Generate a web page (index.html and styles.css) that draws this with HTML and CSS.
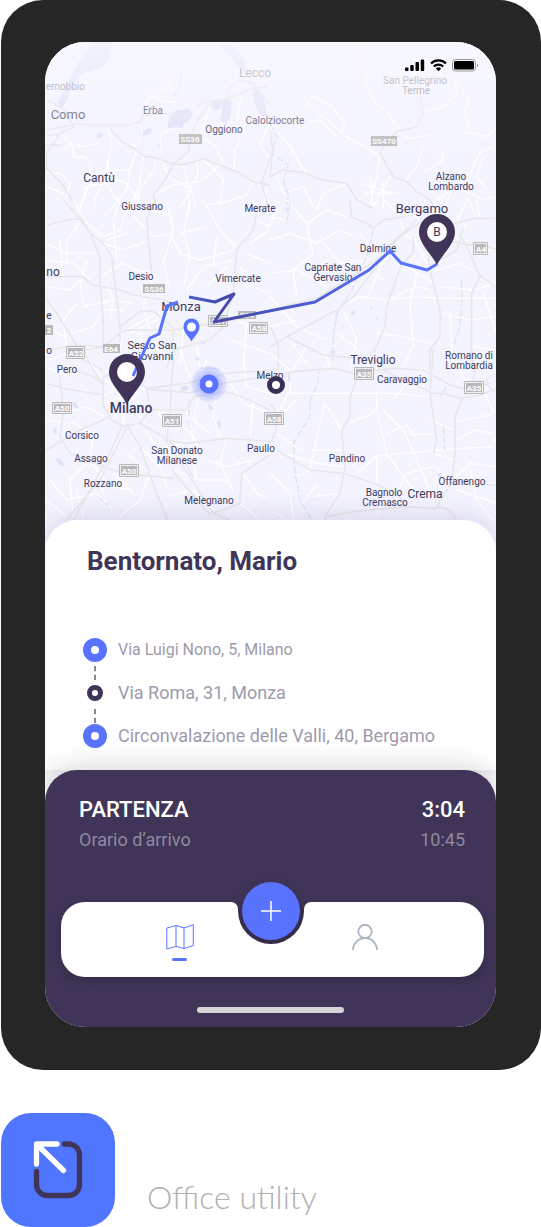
FILE: index.html
```
<!DOCTYPE html>
<html lang="it">
<head>
<meta charset="UTF-8">
<meta name="viewport" content="width=device-width, initial-scale=1.0">
<title>Office utility</title>
<link rel="stylesheet" href="styles.css">
</head>
<body>
<main class="phone">
  <div class="screen">
    <div class="status">
      <svg width="20" height="14" viewBox="0 0 20 14"><path d="M0 10.500a1 1 0 0 1 1-1h1.500a1 1 0 0 1 1 1V12a1 1 0 0 1-1 1H1a1 1 0 0 1-1-1zM5.300 8a1 1 0 0 1 1-1h1.400a1 1 0 0 1 1 1v4a1 1 0 0 1-1 1H6.300a1 1 0 0 1-1-1zM10.500 5a1 1 0 0 1 1-1H13a1 1 0 0 1 1 1v7a1 1 0 0 1-1 1h-1.500a1 1 0 0 1-1-1zM15.700 2.500a1 1 0 0 1 1-1h1.500a1 1 0 0 1 1 1V12a1 1 0 0 1-1 1h-1.500a1 1 0 0 1-1-1z"/></svg>
      <svg width="17" height="14" viewBox="0 0 17 14"><g fill="none" stroke="#000" stroke-width="2.200"><path d="M1 5.600a10.500 10.500 0 0 1 15 0"/><path d="M3.800 8.500a6.700 6.700 0 0 1 9.400 0"/></g><path d="M5.800 10.500a3.900 3.900 0 0 1 5.400 0L8.500 13.200z"/></svg>
      <svg width="27" height="14" viewBox="0 0 27 14"><rect x=".5" y="1.500" width="23" height="11.500" rx="3" fill="none" stroke="#999"/><rect x="2" y="3" width="20" height="8.500" rx="1.500"/><path d="M25 5.500v4q2-2 0-4" fill="#888"/></svg>
    </div>

    <svg class="map" viewBox="45 42 451 500" role="img" aria-label="Milano - Monza - Bergamo">
      <defs>
        <linearGradient id="fade" x1="0" y1="0" x2="0" y2="1">
          <stop offset="0" stop-color="#f8f8ff"/>
          <stop offset="1" stop-color="#f8f8ff" stop-opacity="0"/>
        </linearGradient>
        <linearGradient id="trip" gradientUnits="userSpaceOnUse" x1="190" y1="0" x2="400" y2="0">
          <stop offset="0" stop-color="#4d5fd0"/>
          <stop offset=".15" stop-color="#4548a8"/>
          <stop offset="1" stop-color="#5973ff"/>
        </linearGradient>
        <radialGradient id="glow">
          <stop offset=".5" stop-color="#5973ff" stop-opacity=".4"/>
          <stop offset="1" stop-color="#5973ff" stop-opacity=".08"/>
        </radialGradient>
      </defs>
      <rect class="land" x="45" y="42" width="451" height="500"/>

      <!-- north west -->
      <g transform="translate(40 40) scale(.3333)">
        <path class="water" d="M120 60Q150 20 170 0H215Q220 60 180 85L130 100Q105 120 90 155 75 200 60 205 48 190 60 170 80 150 90 110ZM560 10Q620 40 615 95L590 80Q575 40 540 20Z"/>
        <path class="water" d="M388 228l20-18 40-2 11 15-14 20-14 8 -3 14-18-4-28 4zM297 285l12-16 22-6 9 7-14 12-20 9zM168 287l8-9 14 3-4 10-12 4zM515 185l14-6 14 3-2 24-18 8-10-12zM545 180l20-6 10 15-2 40-16 22-20-12 10-22zM645 142l12 4 12 24 10 40 6 18-22 0-16-30-8-30z"/>
        <path class="river" d="M425 100l-10 50-13 20M355 315l6 8"/>
        <path class="minor" d="M310 215l20-50 50-20 25-45M325 165l50 20 35 0M205 258l10 60-20 90M240 300l50 20 20-50M70 290l30 30 0 30 35 0 15 20 0 60-20 50-20 30M20 395l40 5 30 30-10 40M60 330l40-20 30 10 40-10M290 330l-20 60-10 60-50 60M270 390l-60 0-40 40-40 15M310 348l-10 80-30 80M350 355l-10 40-40 50-10 60M360 355l30 60 60 30 20 60M470 360l5 40-30 60 5 50M490 358l60 60-10 90M540 375l-60 50-80 10-60 30M580 395l5-60 30-80M600 300l-10-60 15-70M640 425l-20 40-60 20-60 10M680 440l-10 60M160 510l10-50 40-60-10-40M120 510l20-70 60-10 30 50M365 345l-5-60 40-20M200 410l60 20 40 60M690 250l-30 60 30 50M510 200l-30 90 50 30 20 50M20 440l50 20M430 375l20 80-30 50"/>
        <path class="road" d="M20 270l40-8 50-10 40 3 55 0 65 0 30-10 10-18 90-8M465 200l50-20 50-2 60-30 60-8M565 178l0-30 35-28 40 10 50 65M205 258l35 42 50 30 20 18 40 6 50 18 30 2 60-17 50 19 50 19 50 30 50 10M515 180l-35 50-30 60-5 45-45 38-25 47-35 45 10 50M20 180l55 30 25 50-40 20-40 60v45l45 45 40 65M20 315h45M20 285l40-2M690 350l-25 80 20 75"/>
      </g>

      <!-- north east -->
      <g transform="translate(270 40) scale(.3333)">
        <path class="minor" d="M250 0l20 60 20 50-5 25 30 50 40 35 25 40M110 190l15-20 60 25 40 60-10 25 110 65M110 190l60 50 70 60M20 270l40 50 30 50 20 30M400 430l40-50 20-60M460 220l60-20 40-40-5-50M555 110l20 40 20 35-15 40 20 20-15 35 30 0 35 10 20-20M600 400l30-60 45-25M460 400l60-40 0-20-15-5M300 500l20-90 10-70M270 430l100 30M280 460h110M310 500l50-90M340 430v80M300 410l10 100M500 480l60-40 80 40 30-10M20 410l20 50 60-20 30 60M140 510l20-50 70-30M520 510l30-70 50-40M590 470l20 40M380 275l40 20 60-10M200 290l-50-50-30 5M450 170v-50M640 350l-20 60 30 40"/>
        <path class="river" d="M0 250l20 40-15 50 50 35-15 50 15 40-5 50"/>
        <path class="road" d="M450 130v40l10 50-20 40-60 15-30 30-20 35 40 70 40 15 30 30 40 25 10 15M0 410l40-20 60 8 50 20 80 12 30 50 50 25M0 270l8 60-8 80"/>
      </g>

      <!-- west -->
      <g transform="translate(40 200) scale(.3333)">
        <path class="minor" d="M100 0l30 60 60 50 50-20 30-90M190 130l60 20 80-30M20 130l60 30 90 0M20 180l80 10 50 50M60 120l10 120M120 70l-40 50 0 70M140 180l-20 70 10 60M110 310l-40 50 10 90M130 320l90-20 60 10M200 250l20 50-10 60M240 0l-20 60 10 120 60 30 50 10M280 50l60 60 50-10 30 60 60 20 100-30M380 0l20 90-30 100 20 70M450 0l-20 100 20 60-20 110M500 80l-80 20M490 0l50 90 50 50M580 180l-90 20-50 70M530 110l-10 90M620 160l70 30M600 200l40 60 50 20M650 60l40 20M560 200l-60 60M20 260l70 10 30-30M20 380l50 30 90-30 30-50 60 0M340 220l-30 100 20 70M300 390l10 70M250 400l-20 90M430 390l-10 100M350 340l-110 60M470 440l10 70M560 350l80 30 50-10M570 420l120 40M620 370l-10 130M30 480l90-30M260 100l-60 20M330 30l70 20M370 300l-20 60-80 40M690 90l-60 40M250 190l-70 40"/>
        <path class="water" d="M465 475l10-4 4 8-11 4zM485 425l10 0 2 7-10 1zM470 505q35-12 75 5z"/>
        <path class="road" d="M70 0l45 50 35 50 30 70v80l10 120v80M20 75l60-15 45-5 25 45 40 30 25 40 25 210v50M20 230h110l25 25 85 15 40 15 90 15 50 15M650 40l-10 50-50 60-10 130-30 100-40 40-50 12-60 20-20 50M345 0l-25 60 15 160M20 300l30 40 60 95 80 5 50-40 20-10h140l120-20 130-20M240 380l60-45 40-2 60 50 20 10M400 390v120M190 440l-50 10-30-15-90 15M110 470l80 40"/>
      </g>

      <!-- east -->
      <g transform="translate(270 200) scale(.3333)">
        <path class="minor" d="M0 120l60-20 80 30 70-40 40 20M50 0l60 70 60-40 60 20M110 70l20 90-60 50 10 80M0 220l80-10 90 50M160 130l50 60 80-10M20 20l-20 60M190 330l80-40 80 10 80-10 90 5 150 0M350 300l90-40 40 10M350 160l-60 140M430 110l40 80M500 210l70-20 30 20M510 260l100 10 70-20M520 340l80 20 70-10M440 220l-20 90 10 130-30 60M395 190l100 60M320 400l80 10 80 20M220 330l40 90-20 80M200 400l80 60M60 420l50 70M0 290l80 90 90 40M80 360l-80 20M110 440l-40 70M180 500l-20-50M570 130l80 20 30-10M590 0l-30 70M620 0l10 60M540 340l10 160M605 440l70 10M640 280l40 120M390 60l20 50 30 10M270 100l40 50 50 10M380 30l60 20M340 0l40 40M270 200l70 40M490 90l80 30M570 100l20-30M480 60l50 10M0 50l40 10"/>
        <path class="river" d="M60 10l-10 60M310 90l-20 80-50 110-35 50-15 70v80M575 240v70l-5 70-20 60M200 340l-5 40"/>
        <path class="water" d="M243 335l12-4-3 12-8 4zM300 318l7 8-6 4zM315 355l8-4-4 12zM210 304l20-4 6-14-4 18z"/>
        <path class="road" d="M240 0l5 50 45 20 20 15 30-25 90-15M440 60l-30 30-70 60-20 50-70 90-50 40-150 80-50 30M430 110v50l-35 30-45 130-5 60-35 80M470 110l10 100 30 120v80l-30 40v60M570 100l30 60 30 70-25 50v160l5 70M630 225l45 35M555 70l60-15h60M0 330l140-36 90-54 90-60 70-70 70-50M460 60l60 60 50 10 105 15M50 410l110 55 140 15M510 180l50-30 20-70M0 380l25 50v80"/>
      </g>

      <!-- south west -->
      <g transform="translate(40 350) scale(.3333)">
        <path class="minor" d="M20 210l80 10 60 30-10 80 60 80 70 10M190 140l50-30 80 70M250 60v168M190 160l130-45M215 210l100-100M200 90l50 60 70 70M30 390l50 60 90-20 50 50M110 420l20 80M150 330l-60 60 10 110M20 450l60 50M260 310l70 60-30 80-60 50M300 290l60 60 20 60M320 240l30 60 80-20M410 210l60 60-10 80M440 180l20 90M480 130l-20 80 50 40M530 110l-10 90 20 60M560 265l-20 70 40 90M500 330l60 20 80-20M400 360l80 30 90 0M380 440l80-20 60 60M610 370l40 60 40 20M570 100l40 60 80 30M610 30l10 80 70 20M500 30l-20 60M420 0l30 80M130 10l60 80M20 50l60 30M70 190l70-20 50 30M220 370l60 60M180 400l20 60M640 150l-10 110M600 460l60 50M450 280l20 110M350 180l40 60"/>
        <path class="water" d="M96 155l14 4 6 18-14-6zM40 238l8-4 3 16-9 4zM48 320l20 14 6 16-20-8zM195 458l16 4-12 4zM422 110l22-3 2 12-22 5zM503 160l10 8 10 8-14 4zM532 215l10-3-2 22-6 2z"/>
        <path class="river" d="M450 150l-5 60 5 30M180 445l10 10"/>
        <path class="road" d="M190 130v35l25 45 35 18 50-8 30-40-10-65-70-55-60 20zM245 230l-45 100-100 180M262 230l-82 160-50 60-50 60M265 230l35 60 50 140 32 80M300 220l70 40 60 90 90 140 50 20M60 80l10 110-10 70 30 50 100 40 60 20 153 15M20 300l100-60 90-40M20 100l50 15 120 20M320 115l120-15 120-30 130-10M320 118l130 10 110-30 130-20M400 30l-5 60-5 110-10 70 60 10 120-15 130 10M330 180h110l20-40 100-15 70 25 60 30M520 490l80-30 5-90 85-55M400 350v15l110 130M130 0l30 60 30 45M100 60l60 20 30 24M380 265l40 40 40 80"/>
      </g>

      <!-- south east -->
      <g transform="translate(270 350) scale(.3333)">
        <path class="minor" d="M0 10l60 50 0 60-30 60M50 130h190l130 0 100 10M165 160l-20 80-25 120M165 160l50 80M320 120v60l30 130 80 110M340 180l60 60 50 110 40 100M240 215l60-20 20-20M350 250l60-25 20 30 60-5M555 215l50-10 60-10M560 270l50-30 60 10M225 350l-80-10-140-40M310 320l190-20 170-10M260 370l60-50 0 80M380 430l30-60 80-20M500 350l40 50M540 400l60-60 80 10M600 360l20 90 50 60M560 420l120 40M490 310l60 20M0 370l60 60 10 80M20 250l70 50M80 150l-60 60M0 480l40 20M140 400l-40 60M120 360l-40 20M215 300l-90 0M410 100l-40 50M600 60l70-30M570 60l30 60M640 120l30 70M480 210l70 30M130 440l80-10M320 500l20-50"/>
        <path class="river" d="M150 50l-10 60-20 40v50l-50 80 5 90 15 80 35 60M530 110l-20 30M520 230l5 70"/>
        <path class="water" d="M52 70h9v25l-6 2zM504 372l12-4-2 12-8 2zM180 5l16-6-4 16z"/>
        <path class="road" d="M0 80l70-15 120-10 60 15 120-15 90 5 80 45 60 15 60-20M260 90l-20 50v60l-25 40 10 110-15 80-40 60-5 20M340 60l60 30 90 40 30 0 50 15 60-10 50-20M490 0l-10 130 20 140-10 40M580 140l-25 60v110l-10 90-45 70 40 10 20 30M20 300l50 30 50 30 100 10 90 30 70 30 30 40 90 5M170 500l80-15 160-15M0 160l15 20 5 60-20 40M600 0l15 60-10 50M545 385l60 20h75M660 80q-25 20 15 45M310 40l-10-30"/>
      </g>

      <g class="shield">
        <path d="M179 134h23v10h-23zM371 136h26v10h-26zM143 284h22v9h-22zM103 344h17v9h-17zM238 311h18v8h-18zM45 325h8v10h-8z"/>
        <g class="frame"><path d="M66.500 346.500h18v12h-18zM208.500 315.500h19v11h-19zM249.500 322.500h18v11h-18zM473.500 242.500h14v12h-14zM52.500 402.500h19v11h-19zM162.500 414.500h19v12h-19zM119.500 464.500h19v12h-19zM264.500 412.500h19v12h-19zM354.500 367.500h19v12h-19zM464.500 381.500h19v12h-19z"/></g>
        <path d="M68 348h15v9h-15zM210 317h16v8h-16zM251 324h15v8h-15zM475 244h11v9h-11zM54 404h16v8h-16zM164 416h16v9h-16zM121 466h16v9h-16zM266 414h16v9h-16zM356 369h16v9h-16zM466 383h16v9h-16z"/>
        <text x="190" y="142">SS36</text><text x="384" y="144">SS470</text><text x="154" y="292">SS36</text><text x="111" y="352">E64</text><text x="247" y="318">E64</text><text x="49" y="333">2</text>
        <text x="76" y="356">A52</text><text x="218" y="324">A51</text><text x="259" y="331">A58</text><text x="481" y="252">A4</text><text x="62" y="411">A50</text><text x="172" y="424">A51</text><text x="129" y="474">A50</text><text x="274" y="422">A58</text><text x="364" y="377">A35</text><text x="474" y="391">A35</text>
      </g>

      <g class="towns">
        <g class="faded">
          <text x="85" y="90" text-anchor="end">ernobbio</text>
          <text class="mid" x="255" y="77">Lecco</text>
          <text x="415" y="84">San Pellegrino</text><text x="416" y="94">Terme</text>
        </g>
        <g class="dim">
          <text class="city" x="68" y="119">Como</text>
          <text x="153" y="114">Erba</text>
          <text x="275" y="124">Calolziocorte</text>
        </g>
        <text x="224" y="133">Oggiono</text>
        <text class="mid" x="99" y="182">Cantù</text>
        <text x="142" y="210">Giussano</text>
        <text x="260" y="212">Merate</text>
        <text x="451" y="180">Alzano</text><text x="451" y="190">Lombardo</text>
        <text class="city" x="422" y="213">Bergamo</text>
        <text x="378" y="252">Dalmine</text>
        <text x="333" y="271">Capriate San</text><text x="333" y="281">Gervasio</text>
        <text class="mid" x="53" y="276">no</text>
        <text x="141" y="280">Desio</text>
        <text x="238" y="282">Vimercate</text>
        <text class="city" x="181" y="311">Monza</text>
        <text x="49" y="319">e</text>
        <text x="49" y="354">o</text>
        <text class="pair" x="152" y="349">Sesto San</text><text class="pair" x="152" y="360">Giovanni</text>
        <text x="67" y="373">Pero</text>
        <text x="270" y="379">Melzo</text>
        <text class="mid" x="373" y="364">Treviglio</text>
        <text x="402" y="383">Caravaggio</text>
        <text x="469" y="359">Romano di</text><text x="469" y="369">Lombardia</text>
        <text class="capital" x="131" y="413">Milano</text>
        <text x="82" y="439">Corsico</text>
        <text x="91" y="462">Assago</text>
        <text x="103" y="487">Rozzano</text>
        <text x="177" y="454">San Donato</text><text x="177" y="464">Milanese</text>
        <text x="261" y="452">Paullo</text>
        <text x="209" y="504">Melegnano</text>
        <text x="347" y="462">Pandino</text>
        <text x="384" y="496">Bagnolo</text><text x="385" y="506">Cremasco</text>
        <text class="mid" x="425" y="498">Crema</text>
        <text x="462" y="485">Offanengo</text>
      </g>

      <rect x="45" y="42" width="451" height="120" fill="url(#fade)" opacity=".75"/>

      <circle cx="127" cy="372" r="10" fill="#fff"/>
      <path class="trip" stroke="#5973ff" d="M133 376L140 360 150 338 159 334 167 306 178 302"/>
      <path class="trip" stroke="url(#trip)" d="M189 297L215 302 234 294 214 322 315 302 369 270 390 251 401 263 427 270 437 264"/>

      <path fill="#403558" fill-rule="evenodd" d="M127 405C122 393 109 384 109 372a18 18 0 0 1 36 0C145 384 132 393 127 405zM127 362a10 10 0 1 0 0 20 10 10 0 0 0 0-20z"/>
      <path fill="#403558" d="M437 265C431 253 419 244 419 232a18 18 0 0 1 36 0C455 244 443 253 437 265z"/>
      <circle cx="437" cy="232" r="10" fill="#fff"/>
      <text class="letter" x="437" y="236">B</text>
      <path fill="#5973ff" d="M191.500 341.500C189 337 183.500 332.500 183.500 326.500a8 8 0 0 1 16 0C199.500 332.500 194 337 191.500 341.500z"/>
      <circle cx="191.500" cy="327" r="4.500" fill="#fff"/>

      <circle cx="209" cy="384" r="18" fill="url(#glow)"/>
      <circle cx="209" cy="384" r="6.500" fill="#fff" stroke="#5973ff" stroke-width="6"/>
      <circle cx="276" cy="385" r="6.500" fill="#fff" stroke="#373052" stroke-width="5"/>
    </svg>

    <section class="sheet">
      <h1>Bentornato, Mario</h1>
      <ol class="stops">
        <li class="first"><span class="dot"></span>Via Luigi Nono, 5, Milano</li>
        <li><span class="dot dark"></span>Via Roma, 31, Monza</li>
        <li><span class="dot"></span>Circonvalazione delle Valli, 40, Bergamo</li>
      </ol>
    </section>

    <section class="panel">
      <div class="row departure"><span>PARTENZA</span><span>3:04</span></div>
      <div class="row arrival"><span>Orario d’arrivo</span><span>10:45</span></div>

      <nav class="tabbar">
        <button class="tab tab-map" aria-label="Mappa">
          <svg width="28" height="26" viewBox="0 0 28 26" fill="none" stroke="#5973ff"><path d="M.800 4L10 1.500 18 4 27.300.700V21.500L18 24.500 10 22.500.800 25zM10 1.500v21M18 4v20.500"/></svg>
          <span class="underline"></span>
        </button>
        <div class="notch">
          <svg width="66" height="75" viewBox="0 0 66 75"><path d="M-1 9H0A33 33 0 0 0 66 9H67V75H-1z" fill="#fff"/></svg>
          <button class="add" aria-label="Aggiungi">
            <svg width="20" height="20" viewBox="0 0 20 20" stroke="#fff" stroke-width="1.500"><path d="M10 0v20M0 10h20"/></svg>
          </button>
        </div>
        <button class="tab tab-user" aria-label="Profilo">
          <svg width="26" height="26" viewBox="0 0 26 26" fill="none" stroke="#a9b5c2" stroke-width="1.800"><circle cx="13" cy="7.500" r="6.700"/><path d="M1 26a12 12 0 0 1 24 0"/></svg>
        </button>
      </nav>
      <div class="home"></div>
    </section>
  </div>
</main>

<footer class="brand">
  <svg width="114" height="114" viewBox="0 0 114 114" fill="none" stroke-width="5.300" stroke-linecap="round" stroke-linejoin="round">
    <rect width="114" height="114" rx="30" fill="#5075ff"/>
    <path stroke="#403558" d="M63.500 31H67.500A11 11 0 0 1 78.500 42V71.500A11 11 0 0 1 67.500 82.500H46.500A11 11 0 0 1 35.500 71.500V58.500"/>
    <path stroke="#fff" d="M56 31H35.500V51M36.500 32L62.500 57.500"/>
  </svg>
  <span>Office utility</span>
</footer>
</body>
</html>
```
FILE: styles.css
```
* {
  box-sizing: border-box;
}
body {
  margin: 0;
  padding-left: 1px;
  background-color: #fff;
  font-family: Roboto, sans-serif;
}
button {
  padding: 0;
  border: none;
  cursor: pointer;
}
.phone {
  padding: 42px 45px 43px 44px;
  border-radius: 42px;
  background-color: #262626;
}
.screen {
  position: relative;
  overflow: hidden;
  border-radius: 40px;
  background-color: #fff;
}
.status {
  position: absolute;
  top: 16px;
  right: 17px;
  display: flex;
  gap: 5px;
}

/* map */
.map {
  display: block;
  width: 100%;
  height: auto;
}
.land {
  fill: #f4f4ff;
}
.water {
  fill: #dfe2f7;
}
.river, .minor, .road, .trip {
  fill: none;
  stroke-linejoin: round;
}
.river {
  stroke: #dfe2f7;
  stroke-width: 4;
  stroke-dasharray: 22 7;
}
.minor {
  stroke: #fff;
  stroke-width: 4;
}
.road {
  stroke: #e8e8ea;
  stroke-width: 5;
}
.trip {
  stroke-width: 3;
}
.shield {
  fill: #b9b9bb;
}
.shield text {
  fill: #fff;
  font-size: 8px;
  font-weight: 700;
  text-anchor: middle;
}
.frame {
  fill: #f0f0f2;
  stroke: #b9b9bb;
}
.towns {
  fill: #3e3a5c;
  font-size: 10px;
  text-anchor: middle;
}
.towns .faded {
  fill: #8d8aa0;
}
.towns .dim {
  fill: #54506e;
}
.pair {
  font-size: 11px;
}
.mid {
  font-size: 12px;
}
.city {
  font-size: 13px;
}
.capital {
  font-size: 14px;
  font-weight: 500;
}
.letter {
  fill: #403558;
  font-size: 12px;
  text-anchor: middle;
}

/* trip sheet */
.sheet {
  position: relative;
  margin-top: -22px;
  padding: 25px 38px 22px;
  border-radius: 32px 32px 0 0;
  background-color: #fff;
  box-shadow: 0 0 30px rgba(64, 53, 130, 0.2);
}
h1 {
  margin: 0 0 61px 4px;
  color: #403558;
  font-size: 26px;
  line-height: 32px;
}
.stops {
  display: grid;
  gap: 19px;
  margin: 0;
  padding: 0;
  list-style: none;
}
.stops li {
  position: relative;
  display: grid;
  grid-template-columns: 24px 1fr;
  align-items: center;
  gap: 11px;
  color: #9e9aad;
  font-size: 18px;
  line-height: 24px;
}
.stops .first {
  font-size: 16px;
}
.stops li:not(:last-child)::after {
  content: "";
  position: absolute;
  top: 28px;
  left: 11px;
  height: 14px;
  border-left: 2px dashed #8a8599;
}
.dot {
  width: 24px;
  height: 24px;
  border: 8px solid #5973ff;
  border-radius: 50%;
}
.dot.dark {
  justify-self: center;
  width: 16px;
  height: 16px;
  border: 5px solid #403558;
}

/* departure panel */
.panel {
  position: relative;
  padding: 25px 0 14px;
  border-radius: 32px 32px 0 0;
  background-color: #403558;
  box-shadow: 0 0 30px rgba(0, 0, 0, 0.2);
}
.row {
  display: flex;
  justify-content: space-between;
  padding: 0 31px 0 34px;
  line-height: 30px;
}
.departure {
  color: #fff;
  font-size: 22px;
  font-weight: 500;
}
.arrival {
  color: #8f889f;
  font-size: 18px;
}
.tabbar {
  display: grid;
  grid-template-columns: 49fr 66px 50fr;
  height: 75px;
  margin: 47px 12px 0 16px;
  filter: drop-shadow(0 4px 6px rgba(0, 0, 0, 0.2));
}
.tab {
  display: flex;
  background-color: #fff;
}
.tab-map {
  flex-direction: column;
  align-items: flex-end;
  gap: 8px;
  padding: 22px 44px 0 0;
  border-radius: 24px 7px 0 24px;
}
.tab-user {
  padding: 22px 0 0 48px;
  border-radius: 7px 24px 24px 0;
}
.underline {
  width: 15px;
  height: 3px;
  margin-right: 7px;
  border-radius: 2px;
  background-color: #5973ff;
}
.notch {
  position: relative;
}
.notch > svg {
  display: block;
  overflow: visible;
}
.add {
  position: absolute;
  top: -20px;
  left: 4px;
  display: grid;
  place-items: center;
  width: 58px;
  height: 58px;
  border-radius: 50%;
  background-color: #5973ff;
}
.home {
  width: 147px;
  height: 6px;
  margin: 30px auto 0;
  border-radius: 3px;
  background-color: #d6d6d6;
}

/* brand */
.brand {
  display: flex;
  align-items: flex-end;
  gap: 32px;
  margin-top: 43px;
  color: #b0b0b0;
  font-family: Lato, sans-serif;
  font-size: 32px;
  font-weight: 300;
  line-height: 60px;
}
```
